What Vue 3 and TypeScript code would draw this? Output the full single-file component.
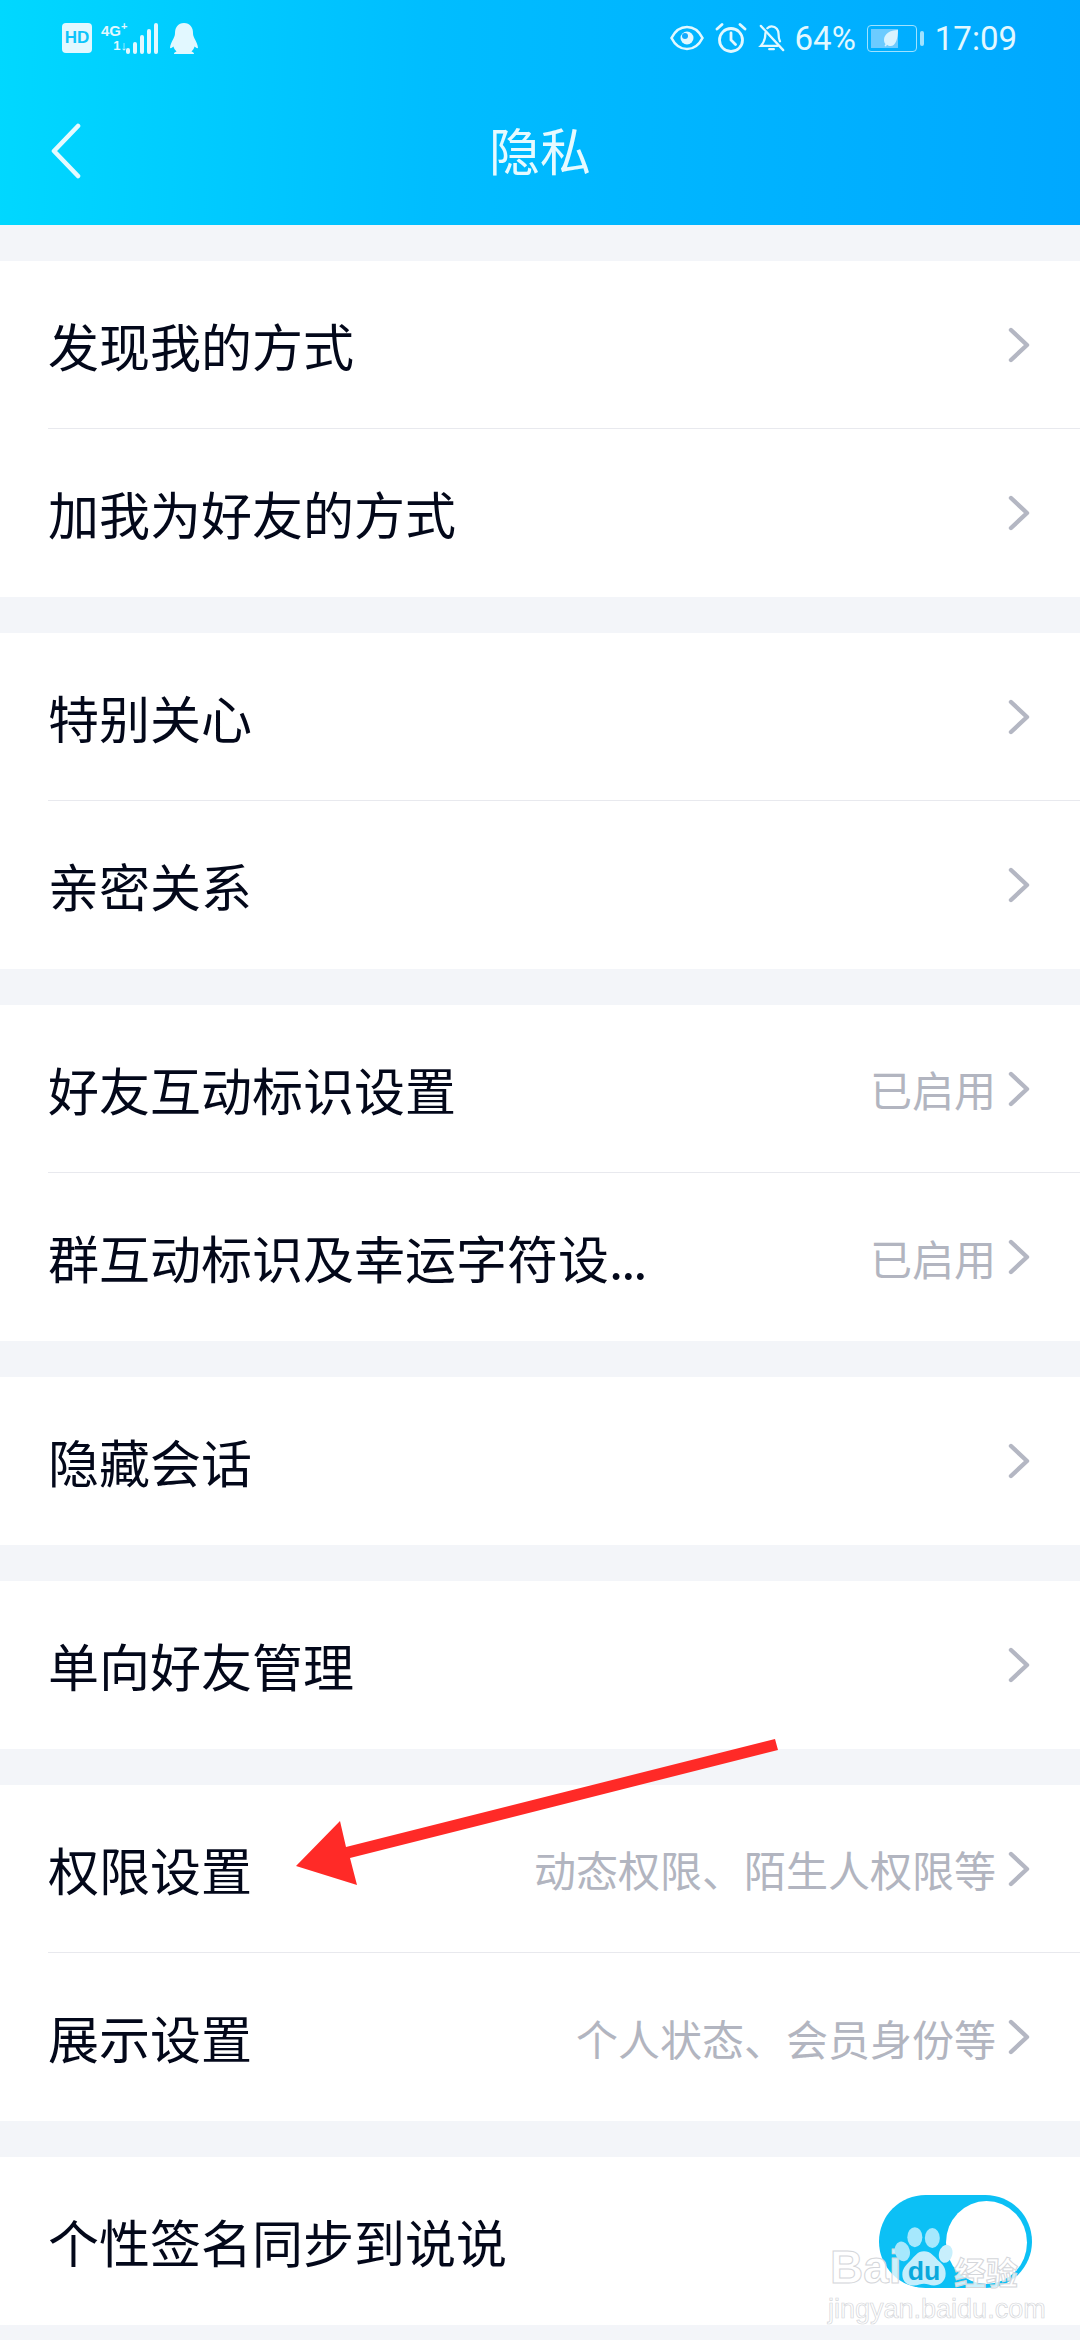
<script setup lang="ts">
interface Row {
  label: string
  value?: string
  toggle?: boolean
  cut?: boolean
}

const groups: Row[][] = [
  [{ label: '发现我的方式' }, { label: '加我为好友的方式' }],
  [{ label: '特别关心' }, { label: '亲密关系' }],
  [
    { label: '好友互动标识设置', value: '已启用' },
    { label: '群互动标识及幸运字符设', value: '已启用', cut: true },
  ],
  [{ label: '隐藏会话' }],
  [{ label: '单向好友管理' }],
  [
    { label: '权限设置', value: '动态权限、陌生人权限等' },
    { label: '展示设置', value: '个人状态、会员身份等' },
  ],
  [{ label: '个性签名同步到说说', toggle: true }],
]
</script>

<template>
  <div class="page">
    <header class="top">
      <div class="status">
        <div class="status-left">
          <span class="hd">HD</span>
          <div class="net">
            <span class="net-top">4G<sup>+</sup></span>
            <span class="net-bottom">1↓</span>
          </div>
          <div class="bars">
            <i style="height: 6px"></i>
            <i style="height: 12px"></i>
            <i style="height: 19px"></i>
            <i style="height: 25px"></i>
            <i style="height: 31px"></i>
          </div>
          <svg class="qq" width="28" height="33" viewBox="0 0 28 33">
            <path d="M14 1c-6 0-9 4.500-9 10 0 2-.5 3.500-1.500 5.500C2 19.500 0 23 0 26c1 .5 2.500-.5 3.500-1.500.5 2 1.500 3.500 3 5-1.500.5-2.500 1-2.500 2.500h20c0-1.500-1-2-2.500-2.500 1.500-1.500 2.500-3 3-5 1 1 2.500 2 3.500 1.500 0-3-2-6.500-3.500-9.500C23.500 14.500 23 13 23 11c0-5.500-3-10-9-10z" fill="#e2f8ff" />
          </svg>
        </div>
        <div class="status-right">
          <svg width="34" height="26" viewBox="0 0 34 26" fill="none" stroke="#e2f8ff" stroke-width="2.6">
            <path d="M1.500 13C5 6 10.500 2 17 2s12 4 15.500 11C29 20 23.500 24 17 24S5 20 1.500 13z" />
            <circle cx="17" cy="13" r="6.500" fill="#e2f8ff" stroke="none" />
            <circle cx="15" cy="11" r="3" fill="#12aaff" stroke="none" />
          </svg>
          <svg width="32" height="30" viewBox="0 0 32 30" fill="none" stroke="#e2f8ff" stroke-width="2.8" stroke-linecap="round">
            <circle cx="16" cy="17" r="11.500" />
            <path d="M16 10v7l4.500 4.500M2 6l5-4.500M30 6l-5-4.500" />
          </svg>
          <svg width="28" height="30" viewBox="0 0 30 30" fill="none" stroke="#e2f8ff" stroke-width="2.4" stroke-linecap="round">
            <path d="M8 9.500C8 11 7.500 19 3 23.500h18M10 4.500C11.500 3 13 2.500 14.500 2.500c5 0 7.500 4 7.500 8 0 3 .5 6 1.500 8" />
            <path d="M12 27h5M3 2l24 26" />
          </svg>
          <span class="pct">64%</span>
          <div class="battery">
            <div class="battery-body">
              <div class="battery-fill">
                <svg class="leaf" width="18" height="18" viewBox="0 0 18 18">
                  <path d="M16 1C8 1 2 5 2 11c0 1.500.5 3 1.500 4l-1 2 1.500.5 1-1.800C6 16.500 7 17 8.500 17 14 17 16 9 16 1z" fill="#d8f3ff" />
                </svg>
              </div>
            </div>
            <span class="battery-cap"></span>
          </div>
          <span class="clock">17:09</span>
        </div>
      </div>
      <div class="nav">
        <svg class="back" width="30" height="56" viewBox="0 0 30 56" fill="none" stroke="#e6faff" stroke-width="4.6" stroke-linecap="round" stroke-linejoin="round">
          <path d="M27 3L3 28l24 25" />
        </svg>
        <span class="title">隐私</span>
      </div>
    </header>

    <main class="list">
      <section v-for="(group, i) in groups" :key="i" class="group">
        <div v-for="row in group" :key="row.label" class="row">
          <span class="label">{{ row.label }}<span v-if="row.cut" class="dots">...</span></span>
          <span v-if="row.value" class="value">{{ row.value }}</span>
          <div v-if="row.toggle" class="switch">
            <span class="thumb"></span>
          </div>
          <svg v-else class="chev" width="22" height="36" viewBox="0 0 22 36" fill="none" stroke="#b4b7c3" stroke-width="4.4" stroke-linecap="round" stroke-linejoin="round">
            <path d="M3 3l16 15L3 33" />
          </svg>
        </div>
      </section>
    </main>

    <svg class="arrow" width="500" height="170" viewBox="280 1730 500 170">
      <path d="M775 1739L778 1750 350 1858 357 1885 296 1866 340 1821 346 1847z" fill="#ff2a27" />
    </svg>

    <div class="mark">
      <span class="mark-bai">Bai</span>
      <svg class="paw" width="60" height="64" viewBox="0 0 72 76">
        <ellipse cx="10" cy="30" rx="9" ry="12" fill="#a6e8fd" transform="rotate(-15 10 30)" />
        <ellipse cx="25" cy="13" rx="9" ry="12" fill="#a6e8fd" />
        <ellipse cx="46" cy="14" rx="9" ry="12" fill="#a6e8fd" />
        <ellipse cx="62" cy="33" rx="8" ry="11" fill="#c8effc" transform="rotate(15 62 33)" />
        <path d="M36 30c8 0 12 6 18 12 6 5 8 9 8 15 0 10-8 14-14 14-5 0-8-2-12-2s-7 2-12 2c-7 0-14-4-14-13 0-7 4-11 9-16 6-6 9-12 17-12z" fill="#c4eefc" />
        <text x="36" y="64" class="paw-text">du</text>
      </svg>
      <span class="mark-jy">经验</span>
      <span class="mark-url">jingyan.baidu.com</span>
    </div>
  </div>
</template>

<style scoped>
.page {
  position: relative;
  width: 1080px;
  height: 2340px;
  overflow: hidden;
  background: #f3f5f9;
  font-family: "Noto Sans CJK SC", "Liberation Sans", sans-serif;
}
.top {
  height: 225px;
  color: #e6faff;
  background: linear-gradient(92deg, #00d8ff 0%, #00bdff 40%, #00a8ff 100%);
}
.status {
  height: 76px;
  display: flex;
  align-items: center;
  justify-content: space-between;
  padding: 0 63px 0 62px;
}
.status-left {
  display: flex;
  align-items: center;
}
.status-right {
  display: flex;
  align-items: center;
  gap: 11px;
  font-family: Roboto, "Liberation Sans", sans-serif;
  font-size: 33px;
  color: #e2f8ff;
}
.hd {
  width: 30px;
  height: 30px;
  border-radius: 4px;
  background: #e2f8ff;
  color: #0cc4fb;
  font: 700 17px/30px "Liberation Sans", sans-serif;
  text-align: center;
}
.net {
  width: 26px;
  margin-left: 9px;
  display: flex;
  flex-direction: column;
  align-items: flex-end;
  font: 700 15px/15px "Liberation Sans", sans-serif;
  color: #e2f8ff;
}
.net-top {
  align-self: flex-start;
  white-space: nowrap;
}
.net-top sup {
  font-size: 11px;
  line-height: 0;
}
.net-bottom {
  font-size: 13px;
}
.bars {
  display: flex;
  align-items: flex-end;
  gap: 3px;
  margin-left: -1px;
  height: 31px;
}
.bars i {
  width: 4px;
  border-radius: 2px;
  background: #e2f8ff;
}
.qq {
  margin-left: 12px;
}
.pct {
  margin-left: -2px;
}
.battery {
  display: flex;
  align-items: center;
  gap: 3px;
}
.battery-body {
  width: 50px;
  height: 27px;
  padding: 3px;
  box-sizing: border-box;
  border: 1.5px solid #9fe2ff;
  border-radius: 4px;
}
.battery-fill {
  width: 64%;
  height: 100%;
  background: #6ccbff;
  display: flex;
  align-items: center;
  justify-content: flex-end;
}
.leaf {
  margin-right: -2px;
}
.battery-cap {
  width: 4px;
  height: 15px;
  border-radius: 2px;
  background: #9fe2ff;
}
.nav {
  position: relative;
  height: 149px;
  display: flex;
  align-items: center;
  justify-content: center;
}
.back {
  position: absolute;
  left: 51px;
  top: 47px;
}
.title {
  font-size: 51px;
  margin-top: -3px;
}
.list {
  padding-top: 36px;
  display: flex;
  flex-direction: column;
  gap: 36px;
}
.group {
  background: #fff;
  padding-left: 48px;
}
.row {
  height: 168px;
  box-sizing: border-box;
  padding-right: 50px;
  display: flex;
  align-items: center;
  border-bottom: 1.5px solid #e8e9ee;
}
.row:last-child {
  border-bottom: 0;
}
.label {
  flex: 1;
  font-size: 51px;
  color: #03081a;
  white-space: nowrap;
}
.dots {
  letter-spacing: -2px;
}
.value {
  font-size: 42px;
  color: #b2b5c0;
  margin-right: 12px;
}
.chev {
  flex: none;
}
.switch {
  position: relative;
  width: 153px;
  height: 93px;
  margin-right: -2px;
  border-radius: 47px;
  background: #0cc0f5;
}
.thumb {
  position: absolute;
  right: 5px;
  top: 6px;
  width: 81px;
  height: 83px;
  border-radius: 50%;
  background: #fff;
}
.arrow {
  position: absolute;
  left: 280px;
  top: 1730px;
}
.mark {
  position: absolute;
  left: 828px;
  top: 2222px;
  width: 200px;
  height: 100px;
  font-family: "Liberation Sans", sans-serif;
  color: rgba(255, 255, 255, 0.78);
}
.mark-bai {
  position: absolute;
  left: 2px;
  top: 20px;
  font-size: 46px;
  font-weight: 700;
  line-height: 50px;
  -webkit-text-stroke: 1px #d4d6da;
}
.paw {
  position: absolute;
  left: 66px;
  top: 4px;
}
.paw-text {
  font: 700 32px "Liberation Sans", sans-serif;
  fill: #0aa8dc;
  text-anchor: middle;
}
.mark-jy {
  position: absolute;
  left: 126px;
  top: 29px;
  font-family: "Noto Sans CJK SC", sans-serif;
  font-size: 32px;
  font-weight: 700;
  line-height: 40px;
  -webkit-text-stroke: 1px #d4d6da;
}
.mark-url {
  position: absolute;
  left: 0;
  top: 71px;
  font-size: 27px;
  line-height: 32px;
  color: #fff;
  white-space: nowrap;
  -webkit-text-stroke: 0.7px #d4d6da;
}
</style>
